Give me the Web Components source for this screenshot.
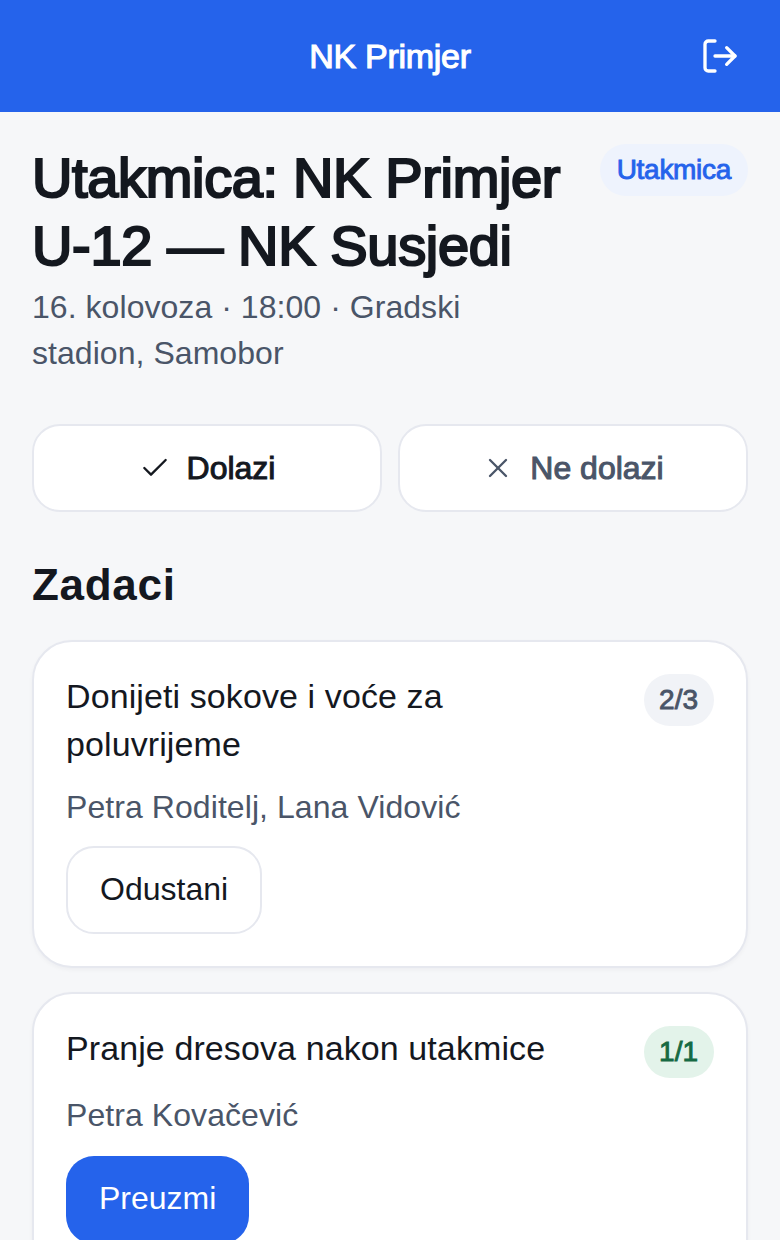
<!DOCTYPE html>
<html lang="hr">
<head>
<meta charset="utf-8">
<title>NK Primjer</title>
<style>
    html, body { margin: 0; height: 1240px; overflow: hidden; }
    body {
        background: #f6f7f9;
        color: #14181f;
        font-family: "Liberation Sans", Arial, sans-serif;
    }
</style>
</head>
<body>
<app-header title="NK Primjer"></app-header>
<main-content>
    <event-head slot="head" badge="Utakmica" title="Utakmica: NK Primjer U-12 — NK Susjedi" meta="16. kolovoza · 18:00 · Gradski stadion, Samobor"></event-head>
    <rsvp-buttons slot="rsvp"></rsvp-buttons>
    <section-title slot="title">Zadaci</section-title>
    <task-card title="Donijeti sokove i voće za poluvrijeme" count="2/3" people="Petra Roditelj, Lana Vidović" action="Odustani"></task-card>
    <task-card title="Pranje dresova nakon utakmice" count="1/1" full people="Petra Kovačević" action="Preuzmi" primary></task-card>
</main-content>

<script>
    // Headings use regular metrics with a thin stroke: the reference is a
    // semi-bold between Liberation's two weights
    const SEMI = '-webkit-text-stroke: 0.032em currentColor;';

    // Header bar with the club name and the logout icon
    class AppHeader extends HTMLElement {
        connectedCallback() {
            this.attachShadow({ mode: 'open' }).innerHTML = `
                <style>
                    :host {
                        display: grid;
                        grid-template-columns: 1fr auto 1fr;
                        align-items: center;
                        height: 112px;
                        padding: 0 40px;
                        box-sizing: border-box;
                        background: #2563eb;
                        color: #fff;
                    }
                    h1 {
                        grid-column: 2;
                        margin: 0;
                        font-size: 34px;
                        font-weight: 400;
                        letter-spacing: -0.3px;
                        ${SEMI}
                    }
                    svg { grid-column: 3; justify-self: end; display: block; }
                </style>
                <h1>${this.getAttribute('title')}</h1>
                <svg width="40" height="40" viewBox="0 0 24 24" fill="none" stroke="#fff" stroke-width="2" stroke-linecap="round" stroke-linejoin="round" aria-hidden="true">
                    <path d="M9 21H5a2 2 0 0 1-2-2V5a2 2 0 0 1 2-2h4"/>
                    <path d="M16 17l5-5-5-5"/>
                    <path d="M21 12H9"/>
                </svg>
            `;
        }
    }

    // Page column, all spacing between blocks lives here
    class MainContent extends HTMLElement {
        connectedCallback() {
            this.attachShadow({ mode: 'open' }).innerHTML = `
                <style>
                    :host {
                        display: block;
                        padding: 32px 32px 0;
                    }
                    .rsvp { margin-top: 48px; }
                    .title { margin-top: 45px; }
                    .tasks {
                        display: flex;
                        flex-direction: column;
                        gap: 24px;
                        margin-top: 27px;
                    }
                </style>
                <slot name="head"></slot>
                <div class="rsvp"><slot name="rsvp"></slot></div>
                <div class="title"><slot name="title"></slot></div>
                <div class="tasks"><slot></slot></div>
            `;
        }
    }

    class EventHead extends HTMLElement {
        connectedCallback() {
            this.attachShadow({ mode: 'open' }).innerHTML = `
                <style>
                    :host {
                        display: flex;
                        justify-content: space-between;
                        align-items: flex-start;
                        gap: 24px;
                    }
                    h2 {
                        margin: 0;
                        font-size: 56px;
                        line-height: 68px;
                        font-weight: 400;
                        letter-spacing: -0.35px;
                        color: #14181f;
                        -webkit-text-stroke: 0.04em currentColor;
                    }
                    p {
                        margin: 4px 0 0;
                        font-size: 32px;
                        line-height: 46px;
                        letter-spacing: 0.05px;
                        color: #4a5568;
                    }
                    .badge {
                        flex: none;
                        padding: 10px 17px;
                        border-radius: 999px;
                        background: #eef3fd;
                        color: #2563eb;
                        font-size: 28px;
                        line-height: 32px;
                        letter-spacing: -0.3px;
                        ${SEMI}
                    }
                    .text { min-width: 0; }
                </style>
                <div class="text">
                    <h2>${this.getAttribute('title')}</h2>
                    <p>${this.getAttribute('meta')}</p>
                </div>
                <span class="badge">${this.getAttribute('badge')}</span>
            `;
        }
    }

    class RsvpButtons extends HTMLElement {
        connectedCallback() {
            this.attachShadow({ mode: 'open' }).innerHTML = `
                <style>
                    :host {
                        display: grid;
                        grid-template-columns: 1fr 1fr;
                        gap: 16px;
                    }
                    button {
                        display: flex;
                        align-items: center;
                        justify-content: center;
                        gap: 16px;
                        height: 88px;
                        padding: 0;
                        border: 2px solid #e6e8ef;
                        border-radius: 28px;
                        background: #fff;
                        font: 400 32px "Liberation Sans", Arial, sans-serif;
                        ${SEMI}
                    }
                    .yes { color: #14181f; }
                    .no { color: #4a5568; }
                    svg { display: block; -webkit-text-stroke: 0; }
                </style>
                <button class="yes" type="button">
                    <svg width="32" height="32" viewBox="0 0 24 24" fill="none" stroke="currentColor" stroke-width="1.75" stroke-linecap="round" stroke-linejoin="round" aria-hidden="true"><path d="M20 6L9 17l-5-5"/></svg>
                    Dolazi
                </button>
                <button class="no" type="button">
                    <svg width="32" height="32" viewBox="0 0 24 24" fill="none" stroke="currentColor" stroke-width="1.75" stroke-linecap="round" stroke-linejoin="round" aria-hidden="true"><path d="M18 6L6 18"/><path d="M6 6l12 12"/></svg>
                    Ne dolazi
                </button>
            `;
        }
    }

    class SectionTitle extends HTMLElement {
        connectedCallback() {
            this.attachShadow({ mode: 'open' }).innerHTML = `
                <style>
                    :host {
                        display: block;
                        font-size: 44px;
                        line-height: 56px;
                        font-weight: 700;
                        letter-spacing: 0.7px;
                        color: #14181f;
                    }
                </style>
                <slot></slot>
            `;
        }
    }

    class TaskCard extends HTMLElement {
        connectedCallback() {
            const primary = this.hasAttribute('primary');
            const full = this.hasAttribute('full');
            this.attachShadow({ mode: 'open' }).innerHTML = `
                <style>
                    :host {
                        display: block;
                        padding: 32px;
                        border: 2px solid #e6e8ef;
                        border-radius: 40px;
                        background: #fff;
                        box-shadow: 0 2px 4px rgba(20, 30, 60, 0.04);
                    }
                    .top {
                        display: flex;
                        justify-content: space-between;
                        align-items: flex-start;
                        gap: 24px;
                    }
                    .name {
                        margin-top: -2px;
                        font-size: 34px;
                        line-height: 48px;
                        letter-spacing: 0.1px;
                        color: #14181f;
                    }
                    .count {
                        flex: none;
                        padding: 10px 16px 10px 15px;
                        border-radius: 999px;
                        background: #f1f3f7;
                        color: #4a5568;
                        font-size: 28px;
                        line-height: 32px;
                        ${SEMI}
                    }
                    .count.full { background: #e3f3ea; color: #166a43; }
                    .people {
                        margin-top: 16px;
                        font-size: 32px;
                        line-height: 46px;
                        letter-spacing: 0.07px;
                        color: #4a5568;
                    }
                    /* one-line title: the pill sets the row height, pull the names back up */
                    :host([full]) .people { margin-top: 14px; margin-bottom: 18px; }
                    button {
                        display: block;
                        height: 88px;
                        margin-top: 16px;
                        padding: 0 32px 2px;
                        border: 2px solid #e6e8ef;
                        border-radius: 28px;
                        background: #fff;
                        color: #14181f;
                        font: 400 32px "Liberation Sans", Arial, sans-serif;
                    }
                    button.primary { padding: 0 33px 3px 33px; background: #2563eb; border: 0; color: #fff; }
                </style>
                <div class="top">
                    <div class="name">${this.getAttribute('title')}</div>
                    <span class="count ${full ? 'full' : ''}">${this.getAttribute('count')}</span>
                </div>
                <div class="people">${this.getAttribute('people')}</div>
                <button class="${primary ? 'primary' : ''}" type="button">${this.getAttribute('action')}</button>
            `;
        }
    }

    customElements.define('app-header', AppHeader);
    customElements.define('main-content', MainContent);
    customElements.define('event-head', EventHead);
    customElements.define('rsvp-buttons', RsvpButtons);
    customElements.define('section-title', SectionTitle);
    customElements.define('task-card', TaskCard);
</script>
</body>
</html>
